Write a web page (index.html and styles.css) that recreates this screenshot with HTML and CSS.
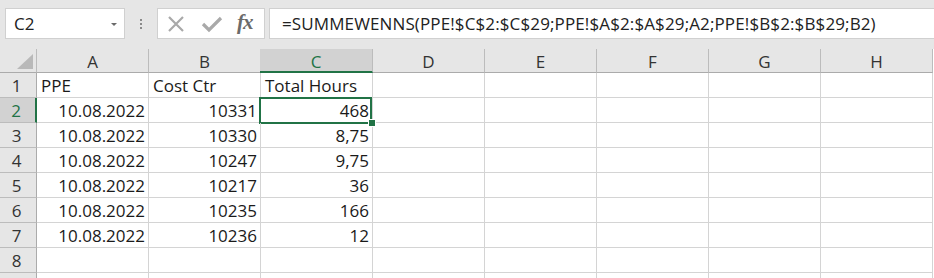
FILE: index.html
```html
<!DOCTYPE html>
<html>
<head>
<meta charset="utf-8">
<link rel="stylesheet" href="styles.css">
</head>
<body>
<div class="app">
  <div class="fbar">
    <div class="namebox">
      <span class="nb-text">C2</span>
      <span class="nb-arrow"></span>
    </div>
    <div class="grip"><i></i><i></i><i></i></div>
    <div class="iconbox">
      <svg class="ico" width="20" height="20" viewBox="0 0 20 20"><path d="M3 3 L17 17 M17 3 L3 17" stroke="#a9a9a9" stroke-width="2.2" fill="none"/></svg>
      <svg class="ico" width="22" height="20" viewBox="0 0 22 20"><path d="M2 10 L8 16 L20 4" stroke="#a9a9a9" stroke-width="3.2" fill="none"/></svg>
      <span class="fx">fx</span>
    </div>
    <div class="formula">=SUMMEWENNS(PPE!$C$2:$C$29;PPE!$A$2:$A$29;A2;PPE!$B$2:$B$29;B2)</div>
  </div>
  <div class="sheet">
    <div class="corner"><span class="tri"></span></div>
    <div class="ch">A</div><div class="ch">B</div><div class="ch sel">C</div><div class="ch">D</div><div class="ch">E</div><div class="ch">F</div><div class="ch">G</div><div class="ch">H</div>

    <div class="rh">1</div><div class="c">PPE</div><div class="c">Cost Ctr</div><div class="c">Total Hours</div><div class="c"></div><div class="c"></div><div class="c"></div><div class="c"></div><div class="c"></div>
    <div class="rh sel">2</div><div class="c n">10.08.2022</div><div class="c n">10331</div><div class="c n active">468<span class="selbox"></span><span class="handle"></span></div><div class="c"></div><div class="c"></div><div class="c"></div><div class="c"></div><div class="c"></div>
    <div class="rh">3</div><div class="c n">10.08.2022</div><div class="c n">10330</div><div class="c n">8,75</div><div class="c"></div><div class="c"></div><div class="c"></div><div class="c"></div><div class="c"></div>
    <div class="rh">4</div><div class="c n">10.08.2022</div><div class="c n">10247</div><div class="c n">9,75</div><div class="c"></div><div class="c"></div><div class="c"></div><div class="c"></div><div class="c"></div>
    <div class="rh">5</div><div class="c n">10.08.2022</div><div class="c n">10217</div><div class="c n">36</div><div class="c"></div><div class="c"></div><div class="c"></div><div class="c"></div><div class="c"></div>
    <div class="rh">6</div><div class="c n">10.08.2022</div><div class="c n">10235</div><div class="c n">166</div><div class="c"></div><div class="c"></div><div class="c"></div><div class="c"></div><div class="c"></div>
    <div class="rh">7</div><div class="c n">10.08.2022</div><div class="c n">10236</div><div class="c n">12</div><div class="c"></div><div class="c"></div><div class="c"></div><div class="c"></div><div class="c"></div>
    <div class="rh">8</div><div class="c"></div><div class="c"></div><div class="c"></div><div class="c"></div><div class="c"></div><div class="c"></div><div class="c"></div><div class="c"></div>
    <div class="rh"></div><div class="c"></div><div class="c"></div><div class="c"></div><div class="c"></div><div class="c"></div><div class="c"></div><div class="c"></div><div class="c"></div>
  </div>
</div>
</body>
</html>
```

FILE: styles.css
```css
* { box-sizing: border-box; }
html, body { margin: 0; padding: 0; }
body {
  width: 934px;
  height: 278px;
  overflow: hidden;
  background: #e6e6e6;
  font-family: "Open Sans", "Liberation Sans", sans-serif;
  color: #222;
}
.app { width: 934px; }
.fbar {
  height: 49px;
  display: flex;
  align-items: flex-start;
  padding-top: 8px;
}
.namebox {
  margin-left: 5px;
  width: 120px;
  height: 31px;
  background: #fff;
  border: 1px solid #d0d0d0;
  display: flex;
  align-items: center;
  justify-content: space-between;
  padding: 0 7px 0 8px;
}
.nb-text { font-size: 17px; color: #222; }
.nb-arrow {
  width: 0; height: 0;
  border-left: 3px solid transparent;
  border-right: 3px solid transparent;
  border-top: 3px solid #6a6a6a;
  margin-top: 1px;
}
.grip {
  width: 32px;
  height: 31px;
  display: flex;
  flex-direction: column;
  align-items: center;
  justify-content: center;
  gap: 2px;
}
.grip i {
  display: block;
  width: 2px; height: 2px;
  background: #8a8a8a;
}
.iconbox {
  width: 108px;
  height: 31px;
  background: #fff;
  border: 1px solid #d0d0d0;
  display: flex;
  align-items: center;
  padding-left: 8px;
  gap: 15px;
}
.fx {
  font-family: "Liberation Serif", serif;
  font-style: italic;
  font-weight: bold;
  font-size: 21px;
  color: #6b6b6b;
  letter-spacing: -1px;
  margin-left: -1px;
  margin-top: -2px;
}
.formula {
  margin-left: 4px;
  flex: 1;
  height: 31px;
  background: #fff;
  border: 1px solid #d0d0d0;
  border-right: none;
  font-size: 17px;
  line-height: 29px;
  padding-left: 12px;
  letter-spacing: 0.12px;
  white-space: nowrap;
  overflow: hidden;
  color: #222;
}
.sheet {
  display: grid;
  grid-template-columns: 37px repeat(8, 112px);
  grid-template-rows: 24px;
  grid-auto-rows: 25px;
  background: #fff;
  font-size: 17px;
}
.corner {
  background: #e6e6e6;
  border-right: 1px solid #bcbcbc;
  border-bottom: 1px solid #ababab;
  position: relative;
}
.tri {
  position: absolute;
  right: 3px;
  bottom: 3px;
  width: 0; height: 0;
  border-left: 16px solid transparent;
  border-bottom: 15px solid #b9b9b9;
}
.ch {
  background: #e6e6e6;
  border-right: 1px solid #bcbcbc;
  border-bottom: 1px solid #ababab;
  display: flex;
  align-items: center;
  justify-content: center;
  color: #333;
  font-size: 17px;
  padding-top: 1px;
}
.ch.sel {
  background: #d2d2d2;
  color: #217346;
  border-bottom: 2px solid #217346;
  padding-top: 2px;
  margin-left: -1px;
}
.rh {
  background: #e6e6e6;
  border-right: 1px solid #ababab;
  border-bottom: 1px solid #bcbcbc;
  display: flex;
  align-items: center;
  justify-content: center;
  color: #333;
  padding-right: 3px;
}
.rh.sel {
  background: #d2d2d2;
  color: #217346;
  border-right: 2px solid #217346;
}
.c {
  border-right: 1px solid #d4d4d4;
  border-bottom: 1px solid #d4d4d4;
  padding: 0 3px 0 4px;
  line-height: 25px;
  white-space: nowrap;
  color: #1a1a1a;
  position: relative;
}
.c.n { text-align: right; }
.selbox {
  position: absolute;
  left: -2px;
  top: -1px;
  right: 0;
  bottom: -2px;
  border: 2px solid #217346;
}
.handle {
  position: absolute;
  z-index: 2;
  right: -4px;
  bottom: -5px;
  width: 6px;
  height: 6px;
  background: #217346;
  border: 1px solid #fff;
  box-sizing: content-box;
}
```
